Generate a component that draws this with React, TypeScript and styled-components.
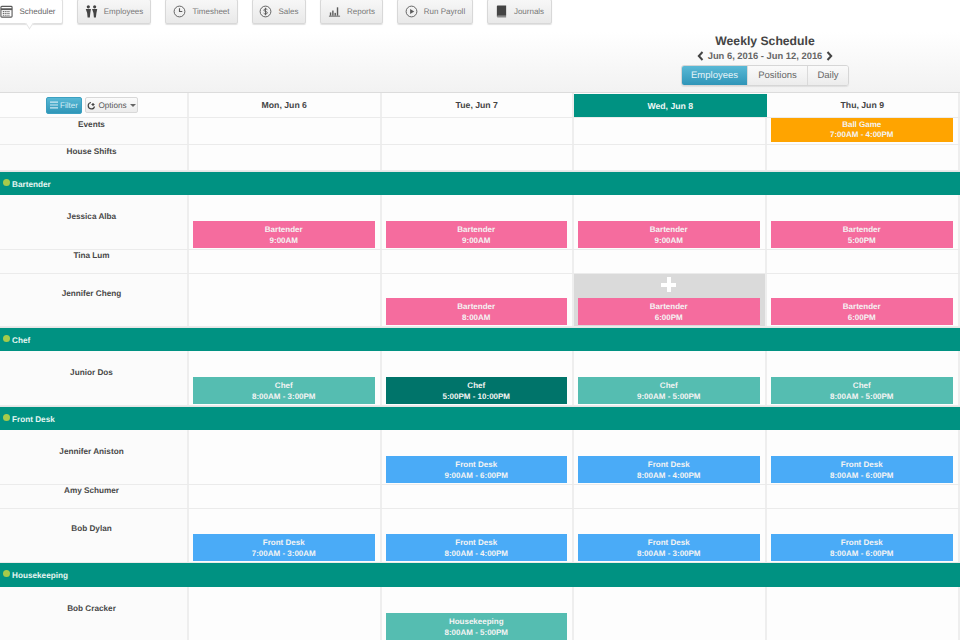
import React from "react";
import styled, { createGlobalStyle } from "styled-components";

const Global = createGlobalStyle`
  html, body { margin: 0; padding: 0; width: 960px; height: 640px; overflow: hidden; background: #fdfdfd; }
  body { font-family: "Liberation Sans", Arial, sans-serif; text-rendering: geometricPrecision; }
  * { box-sizing: border-box; }
`;

const Page = styled.div`
  width: 960px;
  height: 640px;
  overflow: hidden;
  display: flex;
  flex-direction: column;
`;

const Header = styled.header`
  height: 93px;
  flex: none;
  background: linear-gradient(to bottom, #ffffff 0, #ffffff 32px, #f2f2f2 92px);
  border-bottom: 1px solid #dcdcdc;
`;

const Nav = styled.nav`
  display: flex;
  gap: 14px;
  margin-left: -2px;
  margin-top: -1px;
  height: 25px;
`;

const NavButton = styled.div<{ $w: number; $active?: boolean }>`
  position: relative;
  width: ${(p) => p.$w}px;
  height: 25px;
  display: flex;
  align-items: center;
  justify-content: center;
  gap: 6px;
  padding-right: ${(p) => (p.$active ? 5 : 0)}px;
  font-size: 8px;
  color: ${(p) => (p.$active ? "#666" : "#777")};
  border: 1px solid ${(p) => (p.$active ? "#e0e0e0" : "#d8d8d8")};
  border-radius: 2px;
  background: ${(p) => (p.$active ? "#fff" : "linear-gradient(to bottom, #f7f7f7, #e9e9e9)")};
  box-shadow: 0 1px 1px rgba(0, 0, 0, 0.12);
  ${(p) =>
    p.$active &&
    `&::after {
      content: "";
      position: absolute;
      left: 27px;
      bottom: -4px;
      width: 6px;
      height: 6px;
      background: #fff;
      border-right: 1px solid #e4e4e4;
      border-bottom: 1px solid #e4e4e4;
      transform: rotate(45deg) skew(12deg, 12deg);
    }`}
`;

const NavIcon = styled.svg`
  width: 13px;
  height: 13px;
  flex: none;
  color: #5a5a5a;
`;

const WeekBlock = styled.div`
  width: 168px;
  margin: 10px 111px 0 auto;
  display: flex;
  flex-direction: column;
  align-items: center;
`;

const WeekTitle = styled.div`
  font-size: 12.2px;
  font-weight: 700;
  line-height: 14px;
  color: #444;
  white-space: nowrap;
`;

const WeekRange = styled.div`
  display: flex;
  align-items: center;
  gap: 4px;
  margin-top: 1px;
  height: 13px;
  font-size: 9.4px;
  font-weight: 700;
  color: #666;
  white-space: nowrap;
`;

const Chevron = styled.svg`
  width: 7px;
  height: 10px;
  color: #444;
`;

const Tabs = styled.div`
  display: flex;
  width: 168px;
  height: 21px;
  margin-top: 3px;
  flex: none;
  border: 1px solid #d6d6d6;
  border-radius: 3px;
  overflow: hidden;
  box-shadow: 0 1px 1px rgba(0, 0, 0, 0.08);
`;

const Tab = styled.div<{ $w: number; $active?: boolean }>`
  width: ${(p) => p.$w}px;
  display: flex;
  align-items: center;
  justify-content: center;
  font-size: 9.5px;
  color: ${(p) => (p.$active ? "#e4f3f8" : "#666")};
  background: ${(p) => (p.$active ? "linear-gradient(to bottom, #5ab9d6, #2f95b8)" : "linear-gradient(to bottom, #fafafa, #ececec)")};
  border-right: 1px solid #dadada;
  &:last-child { border-right: 0; }
`;

const Row = styled.div<{ $h: number }>`
  display: grid;
  grid-template-columns: 189px 192.5px 192.5px 192.5px 193.5px;
  height: ${(p) => p.$h}px;
  flex: none;
  border-bottom: 1px solid #ebebeb;
`;

const NameCell = styled.div<{ $top: number }>`
  padding: ${(p) => p.$top}px 4px 0 0;
  text-align: center;
  font-size: 8.2px;
  line-height: 11px;
  font-weight: 700;
  color: #484848;
  background: #fbfbfb;
  border-right: 2px solid #eeeeee;
`;

const ToolCell = styled.div`
  display: flex;
  align-items: center;
  gap: 3px;
  padding-left: 46px;
  background: #fdfdfd;
  border-right: 2px solid #eeeeee;
`;

const FilterButton = styled.div`
  width: 36px;
  height: 17px;
  display: flex;
  align-items: center;
  justify-content: center;
  gap: 2px;
  font-size: 8px;
  color: #d5eef6;
  border-radius: 2px;
  border: 1px solid #3ba0c1;
  background: linear-gradient(to bottom, #58b8d5, #2f96b8);
`;

const OptionsButton = styled.div`
  width: 53px;
  height: 16px;
  display: flex;
  align-items: center;
  justify-content: center;
  gap: 2px;
  font-size: 8.2px;
  color: #555;
  border-radius: 2px;
  border: 1px solid #d8d8d8;
  background: linear-gradient(to bottom, #fbfbfb, #ececec);
`;

const Caret = styled.span`
  width: 0;
  height: 0;
  margin-left: 1px;
  border-left: 3px solid transparent;
  border-right: 3px solid transparent;
  border-top: 3px solid #666;
`;

const DayCell = styled.div<{ $active?: boolean }>`
  display: flex;
  align-items: center;
  justify-content: center;
  margin: ${(p) => (p.$active ? "1px 0 0" : "0")};
  font-size: 8.7px;
  font-weight: 700;
  color: ${(p) => (p.$active ? "#eef8f6" : "#444")};
  background: ${(p) => (p.$active ? "#009282" : "#fdfdfd")};
  border-right: ${(p) => (p.$active ? "0" : "2px solid #eeeeee")};
`;

const Cell = styled.div<{ $add?: boolean }>`
  position: relative;
  display: flex;
  align-items: flex-end;
  padding: 0 5px 1px 4px;
  background: ${(p) => (p.$add ? "#dadada" : "#fdfdfd")};
  border-right: 2px solid #eeeeee;
`;

const Plus = styled.span`
  position: absolute;
  left: 87px;
  top: 3px;
  width: 15px;
  height: 15px;
  background:
    linear-gradient(#fff, #fff) center / 15px 4px no-repeat,
    linear-gradient(#fff, #fff) center / 4px 15px no-repeat;
`;

const Shift = styled.div<{ $bg: string; $short?: boolean }>`
  width: 100%;
  height: ${(p) => (p.$short ? 24 : 27)}px;
  margin-bottom: ${(p) => (p.$short ? 1 : 0)}px;
  padding-top: ${(p) => (p.$short ? 2 : 3)}px;
  text-align: center;
  font-size: 8px;
  line-height: ${(p) => (p.$short ? 10 : 11)}px;
  font-weight: 700;
  color: #f4f4f4;
  background: ${(p) => p.$bg};
`;

const Section = styled.div<{ $h: number }>`
  flex: none;
  height: ${(p) => p.$h}px;
  display: flex;
  align-items: center;
  gap: 2px;
  padding: 1px 0 0 3px;
  background: #009282;
  font-size: 8.2px;
  font-weight: 700;
  color: #e6f6f3;
`;

const Dot = styled.span`
  width: 7px;
  height: 7px;
  margin-top: -4px;
  border-radius: 50%;
  background: #a5cb4a;
`;

const Gap = styled.div<{ $h: number }>`
  flex: none;
  height: ${(p) => p.$h}px;
  background: #e6e6e6;
`;

const Icon = ({ kind }: { kind: string }) => {
  const c = "currentColor";
  return (
    <NavIcon viewBox="0 0 14 14" fill="none" stroke={c}>
      {kind === "cal" && (
        <>
          <rect x="1" y="1.5" width="12" height="11.5" rx="1" strokeWidth="1.2" />
          <path d="M1 4.5h12" strokeWidth="2" />
          <path d="M3 7h8M3 9h8M3 11h8" strokeWidth="1.2" strokeDasharray="1.2 .8" />
        </>
      )}
      {kind === "people" && (
        <g fill="#444" stroke="none">
          <circle cx="3.6" cy="2" r="1.7" />
          <circle cx="10.4" cy="2" r="1.7" />
          <path d="M.8 4.2h5.6l-.7 4.3-.5 5H2.8l-.5-5zM7.6 4.2h5.6l-.9 4.3-.6 5H9.600l-.5-5z" />
        </g>
      )}
      {kind === "clock" && (
        <>
          <circle cx="7" cy="7" r="5.8" strokeWidth="1" />
          <path d="M7 3.5V7h3" strokeWidth="1.2" />
        </>
      )}
      {kind === "dollar" && (
        <>
          <circle cx="7" cy="7" r="5.8" strokeWidth="1" />
          <path d="M9 5c-.4-.9-3.8-1.2-3.8.6 0 1.8 3.8.9 3.8 2.8 0 1.7-3.4 1.5-4 .4M7 3v8" strokeWidth="1" />
        </>
      )}
      {kind === "bars" && (
        <g fill={c} stroke="none">
          <rect x="1" y="11.500" width="12" height="1" />
          <rect x="2" y="8" width="1.5" height="3.500" />
          <rect x="4.500" y="6" width="1.5" height="5.500" />
          <rect x="7" y="8.500" width="1.5" height="3" />
          <rect x="9.500" y="2.500" width="1.5" height="9" />
        </g>
      )}
      {kind === "play" && (
        <>
          <circle cx="7" cy="7" r="5.8" strokeWidth="1" />
          <path d="M5.500 4.200 10 7l-4.500 2.800z" fill={c} stroke="none" />
        </>
      )}
      {kind === "book" && (
        <g stroke="none">
          <path d="M2 1.500C2 .9 2.500.5 3 .5h9v11H3.200c-.7 0-1.200.3-1.200.9z" fill="#444" />
          <path d="M2 12c0 .9.5 1.500 1.200 1.500H12v-1.600H3.200c-.6 0-1.200 0-1.200.1z" fill="#888" />
        </g>
      )}
    </NavIcon>
  );
};

const PINK = "#f56c9e";
const TEAL = "#55bdb1";
const DARK = "#00746a";
const BLUE = "#4aabf7";
const ORANGE = "#ffa400";

const nav = [
  { l: "Scheduler", k: "cal", w: 65, a: true },
  { l: "Employees", k: "people", w: 74 },
  { l: "Timesheet", k: "clock", w: 73 },
  { l: "Sales", k: "dollar", w: 54 },
  { l: "Reports", k: "bars", w: 63 },
  { l: "Run Payroll", k: "play", w: 76 },
  { l: "Journals", k: "book", w: 65 },
];

type S = { t: string; b: string; c: string; short?: boolean };
type R = {
  type?: undefined;
  name: string;
  h: number;
  top: number;
  cells: (S | null)[];
  add?: boolean;
};
type Sec = { type: "section"; name: string; h: number; gap: number };

const s = (t: string, b: string, c: string, short?: boolean): S => ({ t, b, c, short });

const rows: (R | Sec)[] = [
  { name: "Events", h: 27, top: 1, cells: [null, null, null, s("Ball Game", "7:00AM - 4:00PM", ORANGE, true)] },
  { name: "House Shifts", h: 26, top: 1, cells: [null, null, null, null] },
  { type: "section", name: "Bartender", h: 23, gap: 1 },
  { name: "Jessica Alba", h: 55, top: 16, cells: [s("Bartender", "9:00AM", PINK), s("Bartender", "9:00AM", PINK), s("Bartender", "9:00AM", PINK), s("Bartender", "5:00PM", PINK)] },
  { name: "Tina Lum", h: 24, top: 0, cells: [null, null, null, null] },
  { name: "Jennifer Cheng", h: 53, top: 14, add: true, cells: [null, s("Bartender", "8:00AM", PINK), s("Bartender", "6:00PM", PINK), s("Bartender", "6:00PM", PINK)] },
  { type: "section", name: "Chef", h: 23, gap: 1 },
  { name: "Junior Dos", h: 55, top: 16, cells: [s("Chef", "8:00AM - 3:00PM", TEAL), s("Chef", "5:00PM - 10:00PM", DARK), s("Chef", "9:00AM - 5:00PM", TEAL), s("Chef", "8:00AM - 5:00PM", TEAL)] },
  { type: "section", name: "Front Desk", h: 23, gap: 1 },
  { name: "Jennifer Aniston", h: 55, top: 16, cells: [null, s("Front Desk", "9:00AM - 6:00PM", BLUE), s("Front Desk", "8:00AM - 4:00PM", BLUE), s("Front Desk", "8:00AM - 6:00PM", BLUE)] },
  { name: "Amy Schumer", h: 24, top: 0, cells: [null, null, null, null] },
  { name: "Bob Dylan", h: 54, top: 14, cells: [s("Front Desk", "7:00AM - 3:00AM", BLUE), s("Front Desk", "8:00AM - 4:00PM", BLUE), s("Front Desk", "8:00AM - 3:00PM", BLUE), s("Front Desk", "8:00AM - 6:00PM", BLUE)] },
  { type: "section", name: "Housekeeping", h: 24, gap: 0 },
  { name: "Bob Cracker", h: 55, top: 16, cells: [null, s("Housekeeping", "8:00AM - 5:00PM", TEAL), null, null] },
];

export default function App() {
  return (
    <Page>
      <Global />
      <Header>
        <Nav>
          {nav.map((n) => (
            <NavButton key={n.l} $w={n.w} $active={n.a}>
              <Icon kind={n.k} />
              {n.l}
            </NavButton>
          ))}
        </Nav>
        <WeekBlock>
          <WeekTitle>Weekly Schedule</WeekTitle>
          <WeekRange>
            <Chevron viewBox="0 0 7 10" fill="none" stroke="currentColor" strokeWidth="2">
              <path d="M5.5 1 1.8 5l3.7 4" />
            </Chevron>
            Jun 6, 2016 - Jun 12, 2016
            <Chevron viewBox="0 0 7 10" fill="none" stroke="currentColor" strokeWidth="2">
              <path d="M1.5 1l3.7 4-3.7 4" />
            </Chevron>
          </WeekRange>
          <Tabs>
            <Tab $w={66} $active>Employees</Tab>
            <Tab $w={60}>Positions</Tab>
            <Tab $w={40}>Daily</Tab>
          </Tabs>
        </WeekBlock>
      </Header>
      <Row $h={25}>
        <ToolCell>
          <FilterButton>
            <svg width="8" height="8" viewBox="0 0 8 8" stroke="#cfeaf3" strokeWidth="1.2">
              <path d="M0 1.2h8M0 4h8M0 6.8h8" />
            </svg>
            Filter
          </FilterButton>
          <OptionsButton>
            <svg width="9" height="9" viewBox="0 0 9 9" fill="none" stroke="#444" strokeWidth="1.2">
              <path d="M7.5 5.5A3.2 3.2 0 1 1 4 1.5M4.5 3.5h3M6 2v3" />
            </svg>
            Options
            <Caret />
          </OptionsButton>
        </ToolCell>
        <DayCell>Mon, Jun 6</DayCell>
        <DayCell>Tue, Jun 7</DayCell>
        <DayCell $active>Wed, Jun 8</DayCell>
        <DayCell>Thu, Jun 9</DayCell>
      </Row>
      {rows.map((r) =>
        r.type === "section" ? (
          <React.Fragment key={r.name}>
            <Gap $h={r.gap} />
            <Section $h={r.h}>
              <Dot />
              {r.name}
            </Section>
          </React.Fragment>
        ) : (
          <Row key={r.name} $h={r.h}>
            <NameCell $top={r.top}>{r.name}</NameCell>
            {r.cells.map((c, i) => (
              <Cell key={i} $add={r.add && i === 2}>
                {r.add && i === 2 && <Plus />}
                {c && (
                  <Shift $bg={c.c} $short={c.short}>
                    {c.t}
                    <br />
                    {c.b}
                  </Shift>
                )}
              </Cell>
            ))}
          </Row>
        )
      )}
    </Page>
  );
}
